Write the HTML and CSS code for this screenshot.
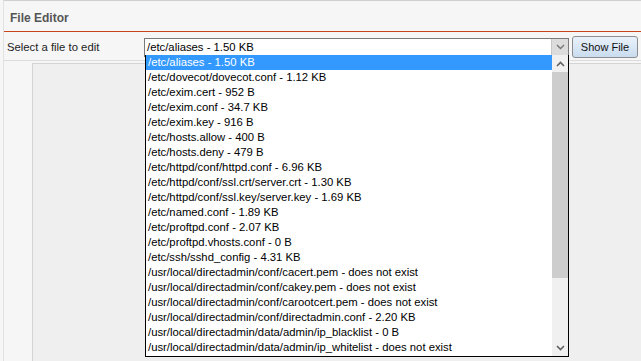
FILE: index.html
```html
<!DOCTYPE html>
<html lang="en">
<head>
    <meta charset="UTF-8">
    <meta name="viewport" content="width=device-width, initial-scale=1.0">
    <title>File Editor</title>
    <link rel="stylesheet" href="styles.css">
</head>
<body>
    <div class="page">
        <div class="header">
            <h1>File Editor</h1>
        </div>

        <!-- File picker row -->
        <div class="form-row">
            <label class="form-label">Select a file to edit</label>
            <div class="select-box">
                <span class="select-value">/etc/aliases - 1.50 KB</span>
                <span class="select-arrow">
                    <svg width="9" height="6" viewBox="0 0 9 6"><path d="M1 1 L4.5 4.5 L8 1" fill="none" stroke="#777" stroke-width="1.4"/></svg>
                </span>
            </div>
            <button class="btn">Show File</button>
        </div>

        <div class="content">
            <div class="panel"></div>
        </div>

        <!-- Open dropdown list -->
        <div class="dropdown">
            <ul class="options">
                <li class="selected">/etc/aliases - 1.50 KB</li>
                <li>/etc/dovecot/dovecot.conf - 1.12 KB</li>
                <li>/etc/exim.cert - 952 B</li>
                <li>/etc/exim.conf - 34.7 KB</li>
                <li>/etc/exim.key - 916 B</li>
                <li>/etc/hosts.allow - 400 B</li>
                <li>/etc/hosts.deny - 479 B</li>
                <li>/etc/httpd/conf/httpd.conf - 6.96 KB</li>
                <li>/etc/httpd/conf/ssl.crt/server.crt - 1.30 KB</li>
                <li>/etc/httpd/conf/ssl.key/server.key - 1.69 KB</li>
                <li>/etc/named.conf - 1.89 KB</li>
                <li>/etc/proftpd.conf - 2.07 KB</li>
                <li>/etc/proftpd.vhosts.conf - 0 B</li>
                <li>/etc/ssh/sshd_config - 4.31 KB</li>
                <li>/usr/local/directadmin/conf/cacert.pem - does not exist</li>
                <li>/usr/local/directadmin/conf/cakey.pem - does not exist</li>
                <li>/usr/local/directadmin/conf/carootcert.pem - does not exist</li>
                <li>/usr/local/directadmin/conf/directadmin.conf - 2.20 KB</li>
                <li>/usr/local/directadmin/data/admin/ip_blacklist - 0 B</li>
                <li>/usr/local/directadmin/data/admin/ip_whitelist - does not exist</li>
            </ul>
            <div class="scrollbar">
                <span class="scroll-btn">
                    <svg width="9" height="6" viewBox="0 0 9 6"><path d="M1 5 L4.5 1.5 L8 5" fill="none" stroke="#606060" stroke-width="1.6"/></svg>
                </span>
                <div class="scroll-track">
                    <div class="scroll-thumb"></div>
                </div>
                <span class="scroll-btn">
                    <svg width="9" height="6" viewBox="0 0 9 6"><path d="M1 1 L4.5 4.5 L8 1" fill="none" stroke="#606060" stroke-width="1.6"/></svg>
                </span>
            </div>
        </div>
    </div>
</body>
</html>
```

FILE: styles.css
```css
* {
    margin: 0;
    padding: 0;
    box-sizing: border-box;
}

body {
    font-family: "Liberation Sans", Arial, sans-serif;
    font-size: 11px;
    color: #222;
    background-color: #f6f6f6;
    height: 100vh;
    overflow: hidden;
}

.page {
    position: relative;
    height: 100%;
    display: flex;
    flex-direction: column;
    border-top: 1px solid #cfcfcf;
    margin-left: 3px;
    border-left: 1px solid #e2e2e2;
}

.header {
    height: 31px;
    flex-shrink: 0;
    padding: 10px 0 0 6px;
    border-bottom: 1px solid #c9431b; /* orange line under title */
}

h1 {
    font-size: 12px;
    font-weight: bold;
    color: #555;
}

.form-row {
    display: flex;
    align-items: center;
    flex-shrink: 0;
    height: 29px;
    padding: 2px 0 0 3px;
    border-bottom: 1px solid #dcdcdc;
}

.form-label {
    width: 137px;
    font-size: 11.3px;
    color: #222;
}

.select-box {
    display: flex;
    align-items: center;
    width: 425px;
    height: 19px;
    background-color: #fff;
    border: 1px solid #7a7a7a;
    padding-left: 2px;
}

.select-value {
    flex: 1;
    font-size: 11.3px;
    color: #000;
}

.select-arrow {
    display: flex;
    align-items: center;
    justify-content: center;
    width: 17px;
    height: 17px;
    background-color: #dcdcdc;
    border-left: 1px solid #c6c6c6;
}

.btn {
    margin-left: 3px;
    width: 66px;
    height: 22px;
    font-family: "Liberation Sans", Arial, sans-serif;
    font-size: 11px;
    color: #111;
    border: 1px solid #8d8d8d;
    border-radius: 3px;
    background: linear-gradient(#eaf2fb, #c9dcef);
}

.content {
    flex: 1;
    padding: 2px 0 0 28px;
}

.panel {
    height: 100%;
    background-color: #efefef;
    border-left: 1px solid #d4d4d4;
    border-top: 1px solid #d4d4d4;
}

/* Open dropdown, drawn over the page */
.dropdown {
    position: absolute;
    left: 141px;
    top: 54px;
    width: 424px;
    height: 302px;
    display: flex;
    background-color: #fff;
    border: 1px solid #000;
    border-top: none;
}

.options {
    flex: 1;
    list-style: none;
}

.options li {
    height: 15px;
    line-height: 15px;
    padding-left: 2px;
    font-size: 11.3px;
    white-space: nowrap;
    color: #000;
}

.options li.selected {
    background-color: #3399ff;
    color: #fff;
}

.scrollbar {
    width: 16px;
    display: flex;
    flex-direction: column;
    background-color: #f0f0f0;
}

.scroll-btn {
    display: flex;
    align-items: center;
    justify-content: center;
    height: 17px;
}

.scroll-track {
    flex: 1;
}

.scroll-thumb {
    height: 206px;
    background-color: #cdcdcd;
}
```
